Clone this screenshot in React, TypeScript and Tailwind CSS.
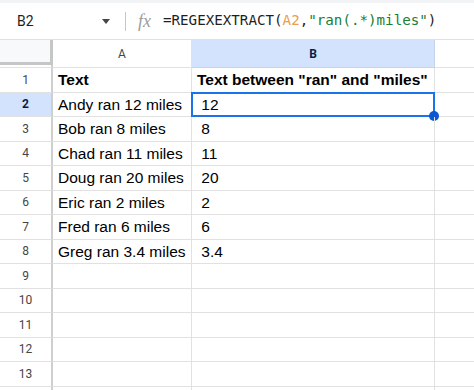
import React from 'react';

const rows: [string, string][] = [
  ['Andy ran 12 miles', ' 12 '],
  ['Bob ran 8 miles', ' 8 '],
  ['Chad ran 11 miles', ' 11 '],
  ['Doug ran 20 miles', ' 20 '],
  ['Eric ran 2 miles', ' 2 '],
  ['Fred ran 6 miles', ' 6 '],
  ['Greg ran 3.4 miles', ' 3.4 '],
];

const cellFont = { fontFamily: '"Liberation Sans", Arial, sans-serif' };

const RowHead: React.FC<{ n?: number; active?: boolean }> = ({ n, active }) => (
  <div
    className={`w-[53px] shrink-0 flex items-center justify-center border-r-2 border-b border-r-[#cfcfcf] border-b-[#e1e1e1] text-[12px] ${
      active ? 'bg-[#d3e3fd] text-[#041e49] font-bold' : 'bg-white text-[#444746]'
    }`}
    style={{ fontFamily: 'Roboto, "Noto Sans", sans-serif' }}
  >
    {n}
  </div>
);

const App: React.FC = () => {
  return (
    <div className="w-[474px] h-[390px] overflow-hidden bg-white flex flex-col">
      <div className="h-[3px] bg-[#f1f3f4] shrink-0" />

      {/* formula bar */}
      <div className="h-[37px] shrink-0 flex items-center border-b border-[#e1e1e1]">
        <span
          className="w-[102px] pl-[17px] text-[14px] text-[#1f1f1f]"
          style={{ fontFamily: 'Roboto, "Noto Sans", sans-serif' }}
        >
          B2
        </span>
        <svg width="8" height="5" viewBox="0 0 8 5" className="mt-[1px]">
          <path d="M0 0h8L4 5z" fill="#444746" />
        </svg>
        <div className="ml-[15px] w-px h-[19px] bg-[#c4c7c5]" />
        <span
          className="ml-[12px] text-[18px] italic text-[#9a9da1] leading-none"
          style={{ fontFamily: '"Liberation Serif", "DejaVu Serif", serif' }}
        >
          fx
        </span>
        <span
          className="ml-[12px] text-[14.2px] text-[#1f1f1f] whitespace-pre"
          style={{ fontFamily: '"DejaVu Sans Mono", "Liberation Mono", monospace' }}
        >
          =REGEXEXTRACT(<span className="text-[#e8a04a]">A2</span>,
          <span className="text-[#188038]">"ran(.*)miles"</span>)
        </span>
      </div>

      {/* column headers */}
      <div className="h-[28px] shrink-0 flex">
        <div className="w-[53px] shrink-0 flex flex-col">
          <div className="h-[25px] bg-[#f8f9fa] border-r-[3px] border-b-[3px] border-[#c4c7c5]" />
          <div className="flex-1 border-r-2 border-r-[#cfcfcf] border-b border-b-[#e1e1e1]" />
        </div>
        <div
          className="w-[139px] shrink-0 flex items-center justify-center border-r border-b border-[#e1e1e1] text-[12px] text-[#444746]"
          style={{ fontFamily: 'Roboto, "Noto Sans", sans-serif' }}
        >
          A
        </div>
        <div
          className="w-[243px] shrink-0 flex items-center justify-center bg-[#d3e3fd] border-r border-b border-[#c6d4ea] text-[12px] font-bold text-[#041e49]"
          style={{ fontFamily: 'Roboto, "Noto Sans", sans-serif' }}
        >
          B
        </div>
        <div className="flex-1 border-b border-[#e1e1e1]" />
      </div>

      {/* row 1 */}
      <div className="h-[24.5px] shrink-0 flex">
        <RowHead n={1} />
        <div
          className="w-[139px] shrink-0 flex items-center pl-[5px] border-r border-b border-[#e1e1e1] text-[15.5px] font-bold text-black"
          style={cellFont}
        >
          Text
        </div>
        <div
          className="w-[243px] shrink-0 flex items-center pl-[5px] border-r border-b border-[#e1e1e1] text-[15.5px] font-bold text-black whitespace-nowrap"
          style={cellFont}
        >
          Text between "ran" and "miles"
        </div>
        <div className="flex-1 border-b border-[#e1e1e1]" />
      </div>

      {rows.map(([a, b], i) => (
        <div key={i} className="h-[24.5px] shrink-0 flex">
          <RowHead n={i + 2} active={i === 0} />
          <div
            className="w-[139px] shrink-0 flex items-center pl-[5px] border-r border-b border-[#e1e1e1] text-[15.5px] text-black whitespace-nowrap"
            style={cellFont}
          >
            {a}
          </div>
          <div
            className="relative w-[243px] shrink-0 flex items-center pl-[5px] border-r border-b border-[#e1e1e1] text-[15.5px] text-black whitespace-pre"
            style={cellFont}
          >
            {b}
            {i === 0 && (
              <>
                <div className="absolute -left-px -top-px -right-px -bottom-px border-2 border-[#1a73e8]" />
                <div className="absolute -right-[5px] -bottom-[5px] w-[10px] h-[10px] rounded-full bg-[#0b57d0]" />
              </>
            )}
          </div>
          <div className="flex-1 border-b border-[#e1e1e1]" />
        </div>
      ))}

      {[9, 10, 11, 12, 13].map((n) => (
        <div key={n} className="h-[24.5px] shrink-0 flex">
          <RowHead n={n} />
          <div className="w-[139px] shrink-0 border-r border-b border-[#e1e1e1]" />
          <div className="w-[243px] shrink-0 border-r border-b border-[#e1e1e1]" />
          <div className="flex-1 border-b border-[#e1e1e1]" />
        </div>
      ))}

      <div className="flex-1 flex">
        <div className="w-[53px] shrink-0 border-r-2 border-r-[#cfcfcf]" />
        <div className="w-[139px] shrink-0 border-r border-[#e1e1e1]" />
        <div className="w-[243px] shrink-0 border-r border-[#e1e1e1]" />
      </div>
    </div>
  );
};

export default App;
